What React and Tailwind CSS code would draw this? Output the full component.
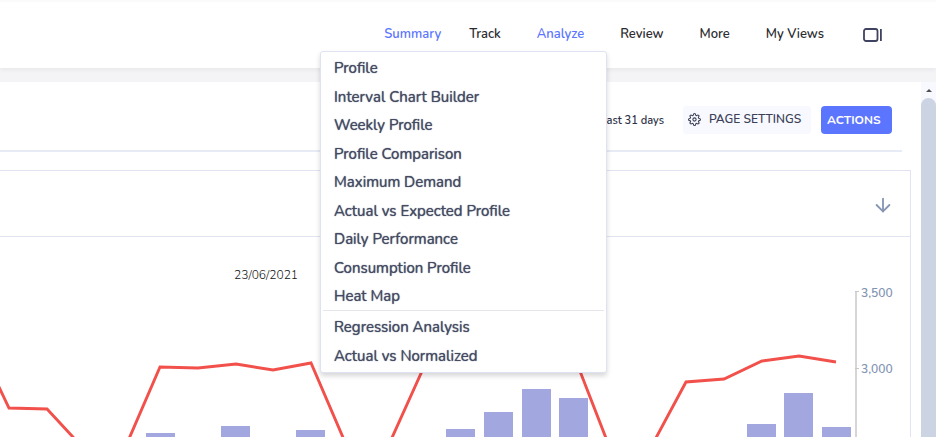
import React, { useState } from 'react'
import clsx from 'clsx'
import { FiSettings, FiArrowDown } from 'react-icons/fi'

const NAV_LINKS = ['Track', 'Analyze', 'Review', 'More', 'My Views']

const ANALYZE_ITEMS = [
  'Profile',
  'Interval Chart Builder',
  'Weekly Profile',
  'Profile Comparison',
  'Maximum Demand',
  'Actual vs Expected Profile',
  'Daily Performance',
  'Consumption Profile',
  'Heat Map',
]

const NORMALIZED_ITEMS = ['Regression Analysis', 'Actual vs Normalized']

// x and top of each demand bar, in chart units
const BARS = [
  [146, 196], [221, 189], [296, 193],
  [446, 192], [484, 175], [522, 152], [559, 161],
  [747, 187], [784, 156], [822, 190],
]

const LINE =
  '-28,93 9,171 47,172 85,213 122,218 160,130 198,131 236,127 273,133 311,126 348,212 386,214 423,132 461,122 498,118 536,124 578,129 611,214 650,212 686,145 724,142 762,124 799,119 836,125'

const PanelIcon = () => (
  <svg width="20" height="14" viewBox="0 0 20 14" fill="none" stroke="#3f4360" strokeWidth="1.8">
    <rect x="1" y="1" width="13.500" height="12" rx="2" />
    <path d="M17.900 1v12" />
  </svg>
)

const MenuList = ({ items }) => (
  <ul>
    {items.map((item) => (
      <li key={item} className="even:pt-px">
        <a href="#" className="block px-[13px] text-[15px] leading-7 font-normal text-[#454a63] [text-shadow:0_0_1px_#454a63] hover:text-[#5b75ff]">
          {item}
        </a>
      </li>
    ))}
  </ul>
)

const AnalyzeMenu = () => (
  <div className="absolute top-[49px] right-[329px] z-10 w-[287px] rounded-[3px] border border-[#dfe3f1] bg-white pt-[2px] pb-[2px] shadow-[0_3px_5px_rgba(0,0,0,0.16)]">
    <MenuList items={ANALYZE_ITEMS} />
    <hr className="mx-[2px] mb-[2px] border-[#e5e5ea]" />
    <MenuList items={NORMALIZED_ITEMS} />
  </div>
)

const Header = () => (
  <header className="relative z-10 flex h-[68px] shrink-0 items-center justify-end border-t-2 border-[#fafafb] bg-white pr-[53px] shadow-[0_2px_4px_rgba(0,0,0,0.05)]">
    <nav className="flex items-center gap-9 text-[13px] font-semibold text-[#2c2c30]">
      <div className="flex gap-7">
        <a href="#" className="text-[#5b75ff]">Summary</a>
        <a href="#">{NAV_LINKS[0]}</a>
      </div>
      {NAV_LINKS.slice(1).map((link) => (
        <a key={link} href="#" className={clsx(link === 'Analyze' && 'text-[#5b75ff]')}>
          {link}
        </a>
      ))}
      <button aria-label="Toggle panel" className="ml-[3px]">
        <PanelIcon />
      </button>
    </nav>
    <AnalyzeMenu />
  </header>
)

const Chart = () => (
  <svg viewBox="0 0 910 200" preserveAspectRatio="xMaxYMin slice" className="block h-[200px] w-full">
    {BARS.map(([x, y]) => (
      <rect key={x} x={x} y={y} width="29" height={200 - y} fill="#a3a7e0" />
    ))}
    <polyline points={LINE} fill="none" stroke="#f2504b" strokeWidth="2.900" />
    <path d="M856 54v146" stroke="#d6d6d6" strokeWidth="2" />
    <path d="M855 54.500h4M855 131.500h4" stroke="#c8c8c8" />
    <text x="234" y="42" fontSize="12" fontWeight="300" fill="#111">23/06/2021</text>
    <text x="861" y="60" fontSize="12" fontWeight="600" fill="#8394b3">3,500</text>
    <text x="861" y="136" fontSize="12" fontWeight="600" fill="#8394b3">3,000</text>
  </svg>
)

const Scrollbar = () => (
  <div className="flex w-[15px] shrink-0 flex-col bg-[#f8f9ff]">
    <div className="flex h-4 items-center justify-center">
      <svg width="6" height="3" viewBox="0 0 6 3">
        <path d="M3 0l3 3H0z" fill="#505050" />
      </svg>
    </div>
    <div className="flex-1 rounded-t-full bg-[#ccd4e4]" />
  </div>
)

export default function App() {
  const [open, setOpen] = useState(true)

  return (
    <div className="flex h-screen flex-col overflow-hidden bg-[#f4f4f6] font-['Nunito','Lato',sans-serif]">
      <Header />
      <div className="mt-[14px] flex min-h-0 flex-1 bg-white">
        <main className="min-w-0 flex-1 pr-[10px]">
          <div className="mr-[9px] flex h-[70px] items-center justify-end border-b-2 border-[#e6ebf6] pt-2 pr-[10px]">
            <span className="mr-[19px] pt-[3px] text-[11px] font-semibold text-[#2f3347]">Last 31 days</span>
            <button className="mr-[10px] flex h-7 w-[128px] items-center gap-2 rounded bg-[#f8f9ff] px-[5px] pb-[2px] text-xs font-semibold whitespace-nowrap text-[#3b3f57]">
              <FiSettings size={13} />
              PAGE SETTINGS
            </button>
            <button className="h-7 w-[71px] rounded-sm bg-[#5b75ff] pl-[6px] text-left text-xs font-bold text-white">
              ACTIONS
            </button>
          </div>
          <section className="mt-[18px] border-t border-r border-[#e1e4f0]">
            <div className="flex h-[66px] items-center justify-end border-b border-[#e1e4f0] pt-[2px] pr-4">
              <button aria-label={open ? 'Collapse' : 'Expand'} onClick={() => setOpen(!open)}>
                <FiArrowDown size={22} className="text-[#8595b4]" />
              </button>
            </div>
            {open && <Chart />}
          </section>
        </main>
        <Scrollbar />
      </div>
    </div>
  )
}
